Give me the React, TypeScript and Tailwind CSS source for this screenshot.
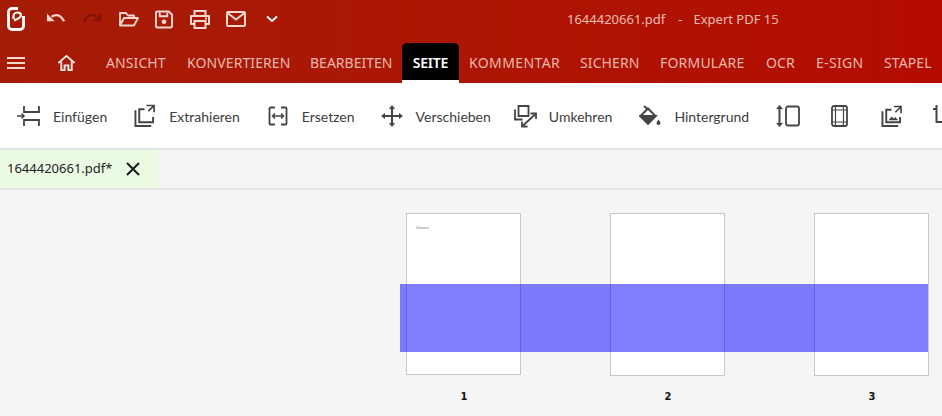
import React from "react";

const S = ({ children, w = 24, h = 24, vb = "0 0 24 24", cls = "" }: { children: React.ReactNode; w?: number; h?: number; vb?: string; cls?: string }) => (
  <svg width={w} height={h} viewBox={vb} fill="none" stroke="currentColor" strokeWidth="2" className={"shrink-0 " + cls}>{children}</svg>
);

const Logo = () => (
  <svg width="18" height="24" viewBox="0 0 18 24" fill="none" stroke="#fff" strokeWidth="2.800" className="shrink-0">
    <path d="M11 1.500H5a3.500 3.500 0 0 0-3.500 3.500v14A3.500 3.500 0 0 0 5 22.500h8a3.500 3.500 0 0 0 3.500-3.500V9" />
    <path d="M6.500 12V9c0-2 2-3.500 4-3.500 2.500 0 3.500 1.500 3.500 2.800 0 2-3 3.700-7 5.200" strokeWidth="2.200" />
  </svg>
);

const Top = () => (
  <div className="flex items-center h-[43px] pb-[5px] text-[#f6d8d2]">
    <div className="ml-[7px]"><Logo /></div>
    <div className="ml-[21px]"><S w={20} h={16} vb="0 0 22 16" ><path d="M6 5.500c6-3.500 10-2 14 5" strokeWidth="2.400" /><path d="M1 2v8.500h8.500z" fill="currentColor" stroke="none" /></S></div>
    <div className="ml-[16px] text-[#7f1205]"><S w={20} h={16} vb="0 0 22 16"><path d="M16 5.500c-6-3.500-10-2-14 5" strokeWidth="2.400" /><path d="M21 2v8.500h-8.500z" fill="currentColor" stroke="none" /></S></div>
    <div className="ml-[17px]"><S w={20} h={16} vb="0 0 20 16"><path d="M1 14.500V2h6l2 2.500h6V7M1 14.500h14L19 7H5z" strokeLinejoin="round" strokeWidth="1.800" /></S></div>
    <div className="ml-[16px]"><S w={18} h={19} vb="0 0 19 19"><path d="M2.500 1h12L18 4.500v12a1.500 1.500 0 0 1-1.500 1.500h-14A1.500 1.500 0 0 1 1 16.500v-14A1.500 1.500 0 0 1 2.500 1z" /><path d="M5 2v4h8V2" /><circle cx="9.500" cy="12" r="2.500" fill="currentColor" stroke="none" /></S></div>
    <div className="ml-[17px]"><S w={20} h={19} vb="0 0 20 19"><path d="M4.500 6V1h11v5M4.500 14H1V6h18v8h-3.500" /><path d="M4.500 11h11v7h-11z" /><path d="M15 8.500h2" /></S></div>
    <div className="ml-[16px]"><S w={20} h={16} vb="0 0 20 16"><rect x="1" y="1" width="18" height="14" rx="1" /><path d="M1.500 2l8.500 6.500L18.500 2" /></S></div>
    <div className="ml-[20px] text-white"><S w={12} h={8} vb="0 0 12 8"><path d="M1 1.500l5 4.500 5-4.500" strokeWidth="2" /></S></div>
    <div className="absolute left-[567px] top-[11px] text-[13px] leading-[17px] whitespace-pre text-[#eebcb4] flex">
      <span>1644420661.pdf</span><span className="ml-[13px]">-</span><span className="ml-[11px]">Expert PDF 15</span>
    </div>
  </div>
);

const Tabs = () => (
  <div className="flex items-start h-[40px] text-[#eeb7ae] text-[14px] leading-[19px] tracking-[0.1px] whitespace-nowrap">
    <div className="ml-[7px] mt-[14px] w-[18px] h-[12px] flex flex-col justify-between">
      <div className="h-[2px] bg-[#f6d8d2]" /><div className="h-[2px] bg-[#f6d8d2]" /><div className="h-[2px] bg-[#f6d8d2]" />
    </div>
    <div className="ml-[32px] mt-[11px] text-[#fbeae6]">
      <S w={19} h={18} vb="0 0 19 19"><path d="M1 9.500L9.500 2 18 9.500" strokeWidth="2" /><path d="M4 8v9h3.500v-5h4v5H15V8" strokeWidth="2" /></S>
    </div>
    <div className="ml-[30px] w-[61px] mt-[10px]">ANSICHT</div>
    <div className="ml-[20px] w-[103px] mt-[10px]">KONVERTIEREN</div>
    <div className="ml-[20px] w-[82px] mt-[10px] tracking-[0px]">BEARBEITEN</div>
    <div className="ml-[10px] w-[57px] h-[40px] rounded-t-[5px] bg-black text-white font-semibold text-center pt-[10px] border-b-[3px] border-white tracking-[-0.2px]">SEITE</div>
    <div className="ml-[10px] w-[91px] mt-[10px] tracking-[0.4px]">KOMMENTAR</div>
    <div className="ml-[20px] w-[60px] mt-[10px]">SICHERN</div>
    <div className="ml-[20px] w-[85px] mt-[10px] tracking-[0.2px]">FORMULARE</div>
    <div className="ml-[21px] w-[30px] mt-[10px]">OCR</div>
    <div className="ml-[20px] w-[47px] mt-[10px] tracking-[0.3px]">E-SIGN</div>
    <div className="ml-[21px] w-[48px] mt-[10px] tracking-[0.1px]">STAPEL</div>
  </div>
);

const Tool = ({ icon, label, cls, gap }: { icon: React.ReactNode; label?: string; cls: string; gap?: string }) => (
  <div className={"flex items-center shrink-0 " + cls}>
    {icon}
    {label && <span className={"text-[14px] text-[#3d3d3d] whitespace-nowrap font-['Lato',sans-serif] " + gap}>{label}</span>}
  </div>
);

const Toolbar = () => (
  <div className="h-[64px] pt-[1px] box-content bg-white flex items-center text-[#444] overflow-hidden border-b-[2px] border-[#e4e4e4]">
    <Tool cls="ml-[17px]" gap="ml-[12px]" label="Einfügen" icon={<S w={24} h={22} vb="0 0 24 22"><path d="M7 1v6h15V1M7 21v-6h15v6" strokeWidth="1.800" /><path d="M0 11h6.500M4.500 8.500L7 11l-2.500 2.500" strokeWidth="1.500" /></S>} />
    <Tool cls="ml-[27px]" gap="ml-[14px]" label="Extrahieren" icon={<S w={21} h={24} vb="0 0 22 24"><path d="M1.500 6v16.500H18M11 5H5.500v13.500H20V13" strokeWidth="2" /><path d="M13 1h8v7M21 1l-6 6" strokeWidth="1.800" /></S>} />
    <Tool cls="ml-[28px]" gap="ml-[14px]" label="Ersetzen" icon={<S w={20} h={20} vb="0 0 20 20"><path d="M7 1.500H2.500a1 1 0 0 0-1 1v15a1 1 0 0 0 1 1H7M13 1.500h4.500a1 1 0 0 1 1 1v15a1 1 0 0 1-1 1H13" strokeWidth="1.800" /><path d="M4.500 10h11M7 7.500L4.500 10 7 12.500M13 7.500l2.500 2.500-2.500 2.500" strokeWidth="1.500" /></S>} />
    <Tool cls="ml-[26px]" gap="ml-[13px]" label="Verschieben" icon={<S w={22} h={22} vb="0 0 22 22"><path d="M11 3v16M3 11h16" strokeWidth="2" /><path d="M11 0l3 4H8zM11 22l3-4H8zM0 11l4-3v6zM22 11l-4-3v6z" fill="currentColor" stroke="none" /></S>} />
    <Tool cls="ml-[23px]" gap="ml-[12px]" label="Umkehren" icon={<S w={23} h={23} vb="0 0 23 23"><path d="M4.500 1h10v10h-10z" strokeWidth="1.800" /><path d="M1 4.500v10h7.500" strokeWidth="1.800" /><path d="M8.500 21L21 9.500" strokeWidth="1.800" /><path d="M8 16.500v5h5.500M16.500 8.500H22V14" strokeWidth="1.800" /></S>} />
    <Tool cls="ml-[27px]" gap="ml-[13px]" label="Hintergrund" icon={<svg width="22" height="22" viewBox="0 0 22 22" fill="none" stroke="currentColor" strokeWidth="2" className="shrink-0"><path d="M1.500 11L9 3.500l7.500 7.500L9 18.500z" /><path d="M5 1l4 3.500" /><path d="M1.500 11h15L9 18.500z" fill="currentColor" /><path d="M19.500 14.500c-1 1.500-2 2.500-2 3.500a2 2 0 0 0 4 0c0-1-1-2-2-3.500z" fill="currentColor" stroke="none" /></svg>} />
    <Tool cls="ml-[27px]" icon={<S w={24} h={22} vb="0 0 24 22"><path d="M3.500 3v16" strokeWidth="2" /><path d="M3.500 0l3.500 4H0zM3.500 22l3.500-4H0z" fill="currentColor" stroke="none" /><rect x="10" y="1.500" width="13" height="19" rx="2" strokeWidth="1.800" /></S>} />
    <Tool cls="ml-[31px]" icon={<S w={17} h={22} vb="0 0 17 22"><rect x="1" y="1" width="15" height="20" rx="2" strokeWidth="1.800" /><path d="M4.500 1v20M12.500 1v20M1 5h15M1 17h15" strokeWidth="1.200" /></S>} />
    <Tool cls="ml-[33px]" icon={<S w={21} h={23} vb="0 0 22 23"><path d="M1.500 6v15.500H18M11 4.500H5.500v13H20V12" strokeWidth="2" /><path d="M13.500 1H21v7M21 1l-6 6" strokeWidth="1.700" /><path d="M8 15.500l3-4 2 2 2-1.500 3 3.500z" fill="currentColor" stroke="none" /></S>} />
    <Tool cls="ml-[31px]" icon={<S w={22} h={22} vb="0 0 22 22"><path d="M3.500 0v17h16M0 4h3.500" strokeWidth="2" /></S>} />
  </div>
);

const Page = ({ h, mark }: { h: string; mark?: boolean }) => (
  <div className={"w-[115px] shrink-0 bg-white border border-[#c8c8c8] " + h}>
    {mark && <div className="ml-[9px] mt-[13px] text-[2.800px] leading-[3px] text-[#777] font-['Liberation_Sans',sans-serif]">Dokument</div>}
  </div>
);

const Label = ({ n }: { n: number }) => (
  <div className="w-[115px] shrink-0 pl-[1px] text-center text-[11px] leading-[13px] font-bold text-[#111] font-['DejaVu_Sans',sans-serif] scale-x-90">{n}</div>
);

export default function App() {
  return (
    <div className="w-[942px] h-[416px] overflow-hidden bg-[#f5f5f5] font-['Noto_Sans',sans-serif] relative">
      <div className="h-[83px] bg-gradient-to-r from-[#a51c06] to-[#b40b00]">
        <Top />
        <Tabs />
      </div>
      <Toolbar />
      <div className="h-[38px] box-content border-b-[2px] border-[#e4e4e4] bg-[#f5f5f5] flex">
        <div className="w-[158px] bg-[#ebfbe3] flex items-center pl-[7px]">
          <span className="text-[13px] text-[#222]">1644420661.pdf*</span>
          <svg width="14" height="14" viewBox="0 0 14 14" className="ml-[14px]" stroke="#1a1a1a" strokeWidth="2"><path d="M1 1l12 12M13 1L1 13" /></svg>
        </div>
      </div>
      <div className="pl-[406px] pt-[23px] flex gap-[89px] items-start">
        <Page h="h-[162px]" mark />
        <Page h="h-[163px]" />
        <Page h="h-[163px]" />
      </div>
      <div className="pl-[406px] mt-[14px] flex gap-[89px]">
        <Label n={1} /><Label n={2} /><Label n={3} />
      </div>
      <div className="absolute left-[400px] top-[284px] w-[528px] h-[68px] bg-[rgba(0,0,255,0.5)]" />
    </div>
  );
}
